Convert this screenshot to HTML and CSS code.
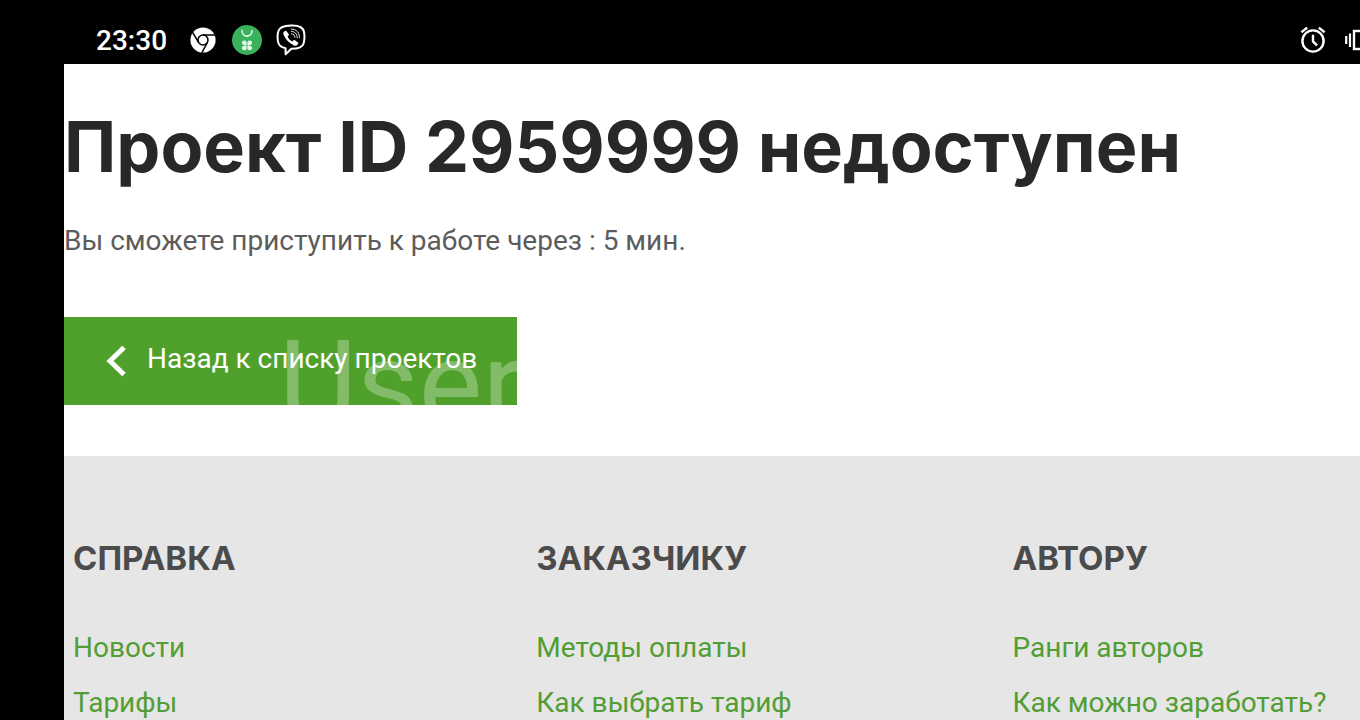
FILE: index.html
```
<!DOCTYPE html>
<html lang="ru">
<head>
<meta charset="utf-8">
<meta name="viewport" content="width=device-width, initial-scale=1">
<title>Проект недоступен</title>
<link rel="stylesheet" href="styles.css">
</head>
<body>
<header class="status-bar">
  <time class="clock">23:30</time>
  <div class="notifications">
    <svg class="icon-chrome" viewBox="0 0 26 26" aria-hidden="true">
      <circle cx="13" cy="13" r="12.6" fill="#fff"/>
      <g fill="none" stroke="#000" stroke-width="1.5">
        <circle cx="13" cy="13" r="5"/>
        <path d="M13 8H25M8.7 15.5L2.4 5.2M17.4 15.5L11.8 25.8"/>
      </g>
    </svg>
    <svg class="icon-bag" viewBox="0 0 30 30" aria-hidden="true">
      <circle cx="15" cy="15" r="15" fill="#39b25b"/>
      <path d="M10 5.5C10 13 20 13 20 5.5" fill="none" stroke="#e2f7e6" stroke-width="1.6" stroke-linecap="round"/>
      <g fill="#e2f7e6">
        <rect x="10" y="15.6" width="4.6" height="4.4" rx="2"/>
        <rect x="15.4" y="15.6" width="4.6" height="4.4" rx="2"/>
        <rect x="10" y="20.8" width="4.6" height="4.4" rx="2"/>
        <rect x="15.4" y="20.8" width="4.6" height="4.4" rx="2"/>
        <rect x="13" y="18.6" width="4" height="3.6"/>
      </g>
      <circle cx="15" cy="20.4" r="1" fill="#39b25b"/>
    </svg>
    <svg class="icon-viber" viewBox="0 0 30 32" aria-hidden="true">
      <path d="M15 1.6C23 1.3 27.2 3.3 28 8C28.7 12 28.6 16 27.6 19.4C26.5 23.6 22.5 24.8 15.4 24.8L9.6 30.3V24.2C5 23.2 2.6 21.4 2 17.6C1.4 14 1.4 10.6 2.2 7.6C3.3 3 7.8 1.8 15 1.6Z" fill="none" stroke="#fff" stroke-width="2" stroke-linejoin="round"/>
      <path d="M8.2 7.6C9.4 6.5 10 6.6 10.8 7.6L12.6 10C13.2 11 12.7 11.6 11.7 12.6C12.3 14.9 14 16.6 16.4 17.4C17.4 16.2 18.2 15.8 19.2 16.4L21.7 18.2C22.6 19 22.4 19.7 21.4 20.8C20.3 22 19.2 22.1 17.9 21.4C13 19 9.6 15.4 7.6 10.8C7.1 9.5 7.2 8.5 8.2 7.6Z" fill="#fff"/>
      <path d="M15.4 9.8C17.6 9.9 18.8 11.2 18.9 13.4M15.4 7.4C19.2 7.6 21.2 9.8 21.2 13.8M15.2 5C20.8 5.2 23.4 8.6 23.4 13.8" fill="none" stroke="#fff" stroke-width="0.9" stroke-linecap="round"/>
    </svg>
  </div>
  <div class="system">
    <svg class="icon-alarm" viewBox="0 0 26 28" aria-hidden="true">
      <g fill="none" stroke="#fff" stroke-width="2.4">
        <circle cx="13" cy="15" r="10.6"/>
        <path d="M13 8.8V15.4L17 19.4M1.4 6.2L7.2 1.6M24.6 6.2L18.8 1.6"/>
      </g>
    </svg>
    <svg class="icon-vibrate" viewBox="0 0 30 22" aria-hidden="true">
      <path d="M1.2 7V15M5 4.4V18" fill="none" stroke="#fff" stroke-width="2.2"/>
      <rect x="9" y="2" width="12" height="18" fill="none" stroke="#fff" stroke-width="2.4"/>
      <path d="M25 4.4V18M28.8 7V15" fill="none" stroke="#fff" stroke-width="2.2"/>
    </svg>
  </div>
</header>
<div class="page">
  <main class="content">
    <h1 class="title">Проект ID 2959999 недоступен</h1>
    <p class="message">Вы сможете приступить к работе через : 5 мин.</p>
    <a class="back" href="#">
      <span class="watermark" aria-hidden="true">User</span>
      <svg class="chevron" viewBox="0 0 22 32" aria-hidden="true"><path d="M19 2.5L5 16L19 29.5" fill="none" stroke="#fff" stroke-width="5"/></svg>
      <span class="back-label">Назад к списку проектов</span>
    </a>
  </main>
  <footer class="footer">
    <nav class="column">
      <h2 class="column-title">СПРАВКА</h2>
      <a class="link" href="#">Новости</a>
      <a class="link" href="#">Тарифы</a>
    </nav>
    <nav class="column">
      <h2 class="column-title">ЗАКАЗЧИКУ</h2>
      <a class="link" href="#">Методы оплаты</a>
      <a class="link" href="#">Как выбрать тариф</a>
    </nav>
    <nav class="column">
      <h2 class="column-title">АВТОРУ</h2>
      <a class="link" href="#">Ранги авторов</a>
      <a class="link" href="#">Как можно заработать?</a>
    </nav>
  </footer>
</div>
</body>
</html>
```
FILE: styles.css
```
* { box-sizing: border-box; }
body {
  margin: 0;
  min-height: 100vh;
  display: flex;
  flex-direction: column;
  overflow: hidden;
  background: #000;
  font-family: Roboto, "Noto Sans", sans-serif;
  font-size: 28px;
  line-height: 32px;
}
.status-bar {
  display: flex;
  align-items: center;
  padding: 16px 0 0 96px;
  height: 64px;
  overflow: hidden;
  color: #fff;
}
.clock {
  padding-top: 2px;
  font-weight: 500;
}
.notifications {
  display: flex;
  align-items: center;
  gap: 16px;
  margin-left: 23px;
}
.icon-chrome { width: 26px; height: 26px; }
.icon-bag { width: 30px; height: 30px; }
.icon-viber { width: 30px; height: 32px; margin-left: -2px; }
.system {
  display: flex;
  align-items: center;
  gap: 19px;
  margin-left: auto;
  margin-right: -15px;
}
.icon-alarm { width: 26px; height: 28px; }
.icon-vibrate { width: 30px; height: 22px; }
.page {
  flex: 1;
  display: flex;
  flex-direction: column;
  margin-left: 64px;
  background: #fff;
}
.content { padding: 43px 0 51px; }
.title {
  margin: 0;
  color: #282828;
  font-family: Inter, "Open Sans", sans-serif;
  font-size: 70px;
  font-weight: 700;
  line-height: 80px;
  white-space: nowrap;
}
.message {
  margin: 38px 0 60px;
  color: #5c5c5c;
}
.back {
  position: relative;
  display: inline-flex;
  align-items: center;
  gap: 20px;
  height: 88px;
  padding: 0 40px 4px 41px;
  overflow: hidden;
  background: #50a12c;
  color: #fff;
  text-decoration: none;
  vertical-align: top;
}
.watermark {
  position: absolute;
  left: 215px;
  top: 8px;
  color: #83bc69;
  font-size: 120px;
  line-height: 120px;
}
.chevron {
  position: relative;
  width: 22px;
  height: 32px;
  margin-top: 3px;
}
.back-label { position: relative; }
.footer {
  flex: 1;
  display: grid;
  grid-template-columns: 36% 1fr 27%;
  padding: 84px 0 0 9px;
  background: #e6e6e6;
}
.column {
  display: flex;
  flex-direction: column;
  align-items: flex-start;
  gap: 23px;
}
.column-title {
  margin: 0 0 33px;
  color: #4b4b4b;
  font-family: Inter, "Open Sans", sans-serif;
  font-size: 33px;
  font-weight: 700;
  line-height: 36px;
}
.link {
  color: #529d34;
  text-decoration: none;
  white-space: nowrap;
}
```
